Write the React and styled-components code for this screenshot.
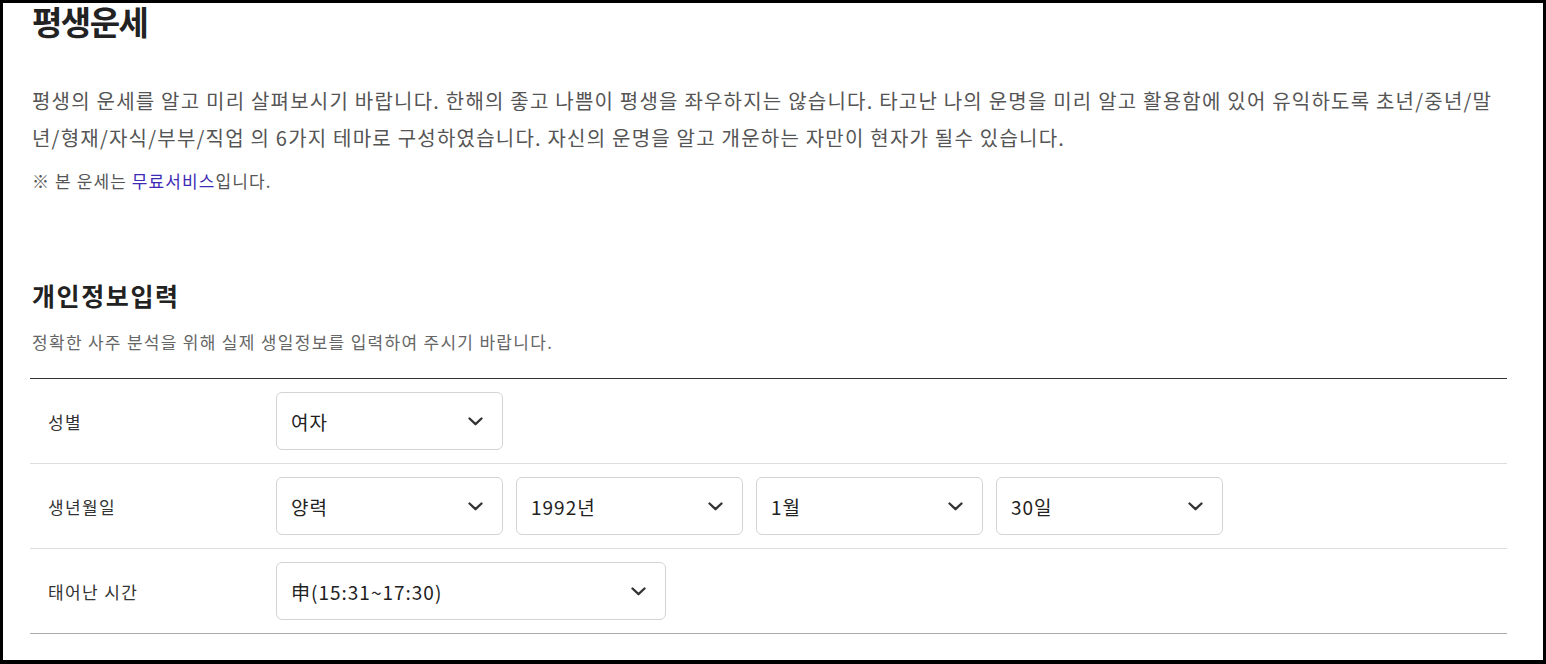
import React from "react";
import styled, { createGlobalStyle } from "styled-components";

const GlobalStyle = createGlobalStyle`
  html, body {
    margin: 0;
    padding: 0;
    background: #fff;
  }
  body {
    font-family: "Noto Sans CJK KR", "Noto Sans", sans-serif;
  }
`;

const Frame = styled.div`
  box-sizing: border-box;
  width: 1546px;
  height: 664px;
  border: 3px solid #000;
  border-bottom-width: 4px;
  overflow: hidden;
  background: #fff;
`;

const Content = styled.div`
  padding: 0 36px 0 27px;
`;

const Title = styled.h2`
  margin: 0 0 0 2px;
  font-size: 33px;
  font-weight: 700;
  color: #222;
  letter-spacing: -1.5px;
  line-height: 36px;
`;

const Intro = styled.p`
  margin: 43px 0 0 2px;
  font-size: 20px;
  line-height: 37px;
  color: #555;
  letter-spacing: 1.22px;
`;

const Note = styled.p`
  margin: 12px 0 0 2px;
  font-size: 17px;
  line-height: 26px;
  color: #555;
  letter-spacing: 1.1px;
`;

const Accent = styled.span`
  color: #3d2bb5;
`;

const SectionTitle = styled.h3`
  margin: 85px 0 0 2px;
  font-size: 25px;
  font-weight: 700;
  color: #222;
  line-height: 32px;
  letter-spacing: 1.6px;
`;

const SectionDesc = styled.p`
  margin: 18px 0 0 2px;
  font-size: 17px;
  line-height: 26px;
  color: #666;
  letter-spacing: 1.3px;
`;

const Table = styled.div`
  margin-top: 23px;
  border-top: 1px solid #333;
  border-bottom: 1px solid #aaa;
`;

const Row = styled.div`
  display: grid;
  grid-template-columns: 246px 1fr;
  align-items: center;
  height: 84px;
  & + & {
    border-top: 1px solid #ddd;
  }
`;

const Label = styled.div`
  padding-left: 18px;
  font-size: 17px;
  color: #333;
  letter-spacing: 1.4px;
`;

const Fields = styled.div`
  display: flex;
  gap: 13px;
`;

const Select = styled.div`
  box-sizing: border-box;
  display: flex;
  align-items: center;
  justify-content: space-between;
  width: ${(p) => (p.$wide ? "390px" : "227px")};
  height: 58px;
  padding: 0 19px 0 14px;
  border: 1px solid #d4d4d4;
  border-radius: 6px;
  font-size: 19px;
  color: #222;
  letter-spacing: 1px;
  background: #fff;
`;

const Chevron = () => (
  <svg width="15" height="9" viewBox="0 0 15 9" fill="none">
    <path d="M1.5 1.5 L7.5 7.2 L13.5 1.5" stroke="#333" strokeWidth="2.3" strokeLinecap="round" strokeLinejoin="round" />
  </svg>
);

function Field({ value, wide }) {
  return (
    <Select $wide={wide}>
      <span>{value}</span>
      <Chevron />
    </Select>
  );
}

export default function App() {
  return (
    <>
      <GlobalStyle />
      <Frame>
        <Content>
          <Title>평생운세</Title>
          <Intro>
            평생의 운세를 알고 미리 살펴보시기 바랍니다. 한해의 좋고 나쁨이 평생을 좌우하지는 않습니다. 타고난 나의 운명을 미리 알고 활용함에 있어 유익하도록 초년/중년/말년/형재/자식/부부/직업 의 6가지 테마로 구성하였습니다. 자신의 운명을 알고 개운하는 자만이 현자가 될수 있습니다.
          </Intro>
          <Note>
            ※ 본 운세는 <Accent>무료서비스</Accent>입니다.
          </Note>

          <SectionTitle>개인정보입력</SectionTitle>
          <SectionDesc>정확한 사주 분석을 위해 실제 생일정보를 입력하여 주시기 바랍니다.</SectionDesc>

          <Table>
            <Row>
              <Label>성별</Label>
              <Fields>
                <Field value="여자" />
              </Fields>
            </Row>
            <Row>
              <Label>생년월일</Label>
              <Fields>
                <Field value="양력" />
                <Field value="1992년" />
                <Field value="1월" />
                <Field value="30일" />
              </Fields>
            </Row>
            <Row>
              <Label>태어난 시간</Label>
              <Fields>
                <Field value="申(15:31~17:30)" wide />
              </Fields>
            </Row>
          </Table>
        </Content>
      </Frame>
    </>
  );
}
